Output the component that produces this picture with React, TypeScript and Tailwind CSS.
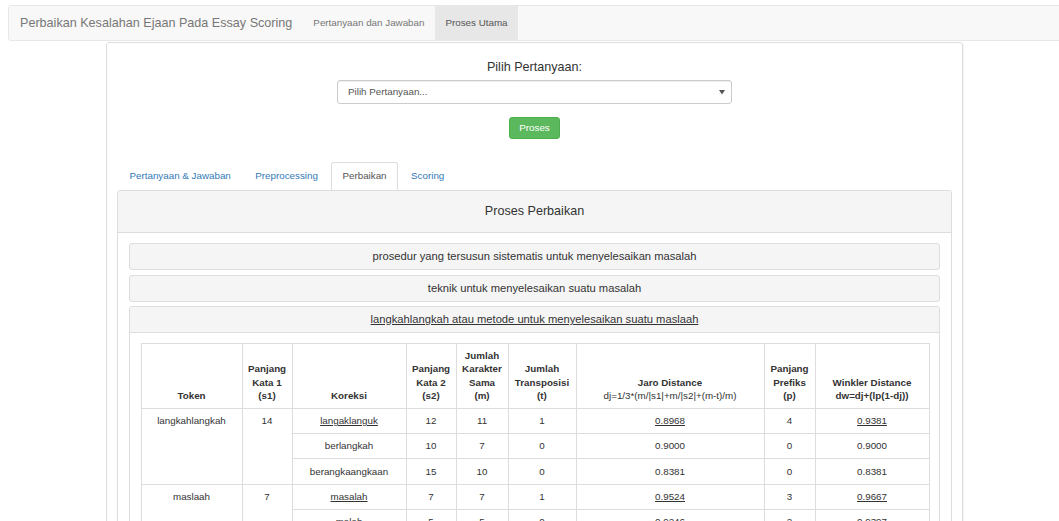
import { Fragment } from 'react'

type Candidate = {
  word: string
  s2: number
  m: number
  t: number
  jaro: string
  p: number
  winkler: string
  best?: boolean
}

type TokenRow = {
  token: string
  s1: number
  candidates: Candidate[]
}

const rows: TokenRow[] = [
  {
    token: 'langkahlangkah',
    s1: 14,
    candidates: [
      { word: 'langaklanguk', s2: 12, m: 11, t: 1, jaro: '0.8968', p: 4, winkler: '0.9381', best: true },
      { word: 'berlangkah', s2: 10, m: 7, t: 0, jaro: '0.9000', p: 0, winkler: '0.9000' },
      { word: 'berangkaangkaan', s2: 15, m: 10, t: 0, jaro: '0.8381', p: 0, winkler: '0.8381' },
    ],
  },
  {
    token: 'maslaah',
    s1: 7,
    candidates: [
      { word: 'masalah', s2: 7, m: 7, t: 1, jaro: '0.9524', p: 3, winkler: '0.9667', best: true },
      { word: 'malah', s2: 5, m: 5, t: 0, jaro: '0.9246', p: 2, winkler: '0.9397' },
    ],
  },
]

const sentences = [
  'prosedur yang tersusun sistematis untuk menyelesaikan masalah',
  'teknik untuk menyelesaikan suatu masalah',
]

const tabs = ['Pertanyaan & Jawaban', 'Preprocessing', 'Perbaikan', 'Scoring']

const td = 'border border-[#ddd] px-[5.5px] py-[5.5px] align-top text-center'
const th = 'border border-[#ddd] px-[5.5px] py-[5.5px] align-bottom text-center font-bold'

function Navbar() {
  return (
    <div className="ml-2 mt-[5px] mr-[-40px] flex h-[36px] items-stretch rounded-[3px] border border-[#e7e7e7] bg-[#f8f8f8]">
      <span className="flex items-center pl-[11px] pr-[10.5px] text-[12.6px] text-[#777]">
        Perbaikan Kesalahan Ejaan Pada Essay Scoring
      </span>
      <a className="flex items-center px-[10.5px] text-[9.8px] text-[#777]">Pertanyaan dan Jawaban</a>
      <a className="flex items-center bg-[#e7e7e7] px-[10.5px] text-[9.8px] text-[#555]">Proses Utama</a>
    </div>
  )
}

function CorrectionTable() {
  return (
    <table className="w-[788px] table-fixed border-collapse text-[9.8px] leading-[13.3px] text-[#333]">
      <colgroup>
        <col className="w-[101px]" />
        <col className="w-[50px]" />
        <col className="w-[114px]" />
        <col className="w-[50px]" />
        <col className="w-[52px]" />
        <col className="w-[68px]" />
        <col className="w-[188px]" />
        <col className="w-[51px]" />
        <col className="w-[114px]" />
      </colgroup>
      <thead>
        <tr>
          <th className={th}>Token</th>
          <th className={th}>Panjang<br />Kata 1<br />(s1)</th>
          <th className={th}>Koreksi</th>
          <th className={th}>Panjang<br />Kata 2<br />(s2)</th>
          <th className={th}>Jumlah<br />Karakter<br />Sama<br />(m)</th>
          <th className={th}>Jumlah<br />Transposisi<br />(t)</th>
          <th className={th}>
            Jaro Distance<br />
            <span className="font-normal">dj=1/3*(m/|s1|+m/|s2|+(m-t)/m)</span>
          </th>
          <th className={th}>Panjang<br />Prefiks<br />(p)</th>
          <th className={th}>Winkler Distance<br />dw=dj+(lp(1-dj))</th>
        </tr>
      </thead>
      <tbody>
        {rows.map((row) => (
          <Fragment key={row.token}>
            {row.candidates.map((c, i) => (
              <tr key={c.word}>
                {i === 0 && (
                  <>
                    <td className={td} rowSpan={row.candidates.length}>{row.token}</td>
                    <td className={td} rowSpan={row.candidates.length}>{row.s1}</td>
                  </>
                )}
                <td className={td}>{c.best ? <u>{c.word}</u> : c.word}</td>
                <td className={td}>{c.s2}</td>
                <td className={td}>{c.m}</td>
                <td className={td}>{c.t}</td>
                <td className={td}>{c.best ? <u>{c.jaro}</u> : c.jaro}</td>
                <td className={td}>{c.p}</td>
                <td className={td}>{c.best ? <u>{c.winkler}</u> : c.winkler}</td>
              </tr>
            ))}
          </Fragment>
        ))}
      </tbody>
    </table>
  )
}

export default function App() {
  return (
    <div className="min-h-screen overflow-hidden bg-white font-['Liberation_Sans',Arial,sans-serif] text-[#333]">
      <Navbar />

      <div className="ml-[106px] mt-[1px] w-[857px] rounded-[3px] border border-[#ddd] bg-white px-[10px] pb-[10px] shadow-[1px_1px_1px_rgba(0,0,0,0.05)]">
        {/* question picker */}
        <div className="flex flex-col items-center">
          <h4 className="mt-[17px] text-[12.6px] leading-[14px]">Pilih Pertanyaan:</h4>
          <div className="mt-[6px] flex h-[24px] w-[395px] items-center justify-between rounded-[3px] border border-[#ccc] bg-white pl-[10px] pr-[6px] text-[9.8px] text-[#555] shadow-[inset_0_1px_1px_rgba(0,0,0,0.075)]">
            <span>Pilih Pertanyaan...</span>
            <svg width="6" height="5" viewBox="0 0 6 5">
              <path d="M0 0h6L3 4.5z" fill="#555" />
            </svg>
          </div>
          <button className="mt-[13px] h-[22px] rounded-[3px] border border-[#4cae4c] bg-[#5cb85c] px-[9px] text-[9.8px] text-white">
            Proses
          </button>
        </div>

        {/* tabs */}
        <div className="mt-[23px] flex h-[28px] items-stretch pl-[1px]">
          {tabs.map((t) =>
            t === 'Perbaikan' ? (
              <span
                key={t}
                className="mr-[1.5px] flex items-center rounded-t-[3px] border border-b-0 border-[#ddd] bg-white px-[10.5px] text-[9.8px] text-[#555]"
              >
                {t}
              </span>
            ) : (
              <span key={t} className="mr-[1.5px] flex items-center px-[11.5px] text-[9.8px] text-[#337ab7]">
                {t}
              </span>
            )
          )}
        </div>

        {/* correction panel */}
        <div className="rounded-[3px] border border-[#ddd]">
          <div className="flex h-[42px] items-center justify-center rounded-t-[3px] border-b border-[#ddd] bg-[#f5f5f5] text-[12.6px]">
            Proses Perbaikan
          </div>
          <div className="flex flex-col gap-[4.5px] px-[11px] pt-[10px] pb-[11px]">
            {sentences.map((s) => (
              <div
                key={s}
                className="flex h-[27px] items-center justify-center rounded-[3px] border border-[#ddd] bg-[#f5f5f5] text-[11.2px]"
              >
                {s}
              </div>
            ))}
            <div className="rounded-[3px] border border-[#ddd]">
              <div className="flex h-[26px] items-center justify-center rounded-t-[3px] border-b border-[#ddd] bg-[#f5f5f5] text-[11.2px]">
                <u>langkahlangkah atau metode untuk menyelesaikan suatu maslaah</u>
              </div>
              <div className="px-[10.5px] pt-[9.5px] pb-[10.5px]">
                <CorrectionTable />
              </div>
            </div>
          </div>
        </div>
      </div>
    </div>
  )
}
